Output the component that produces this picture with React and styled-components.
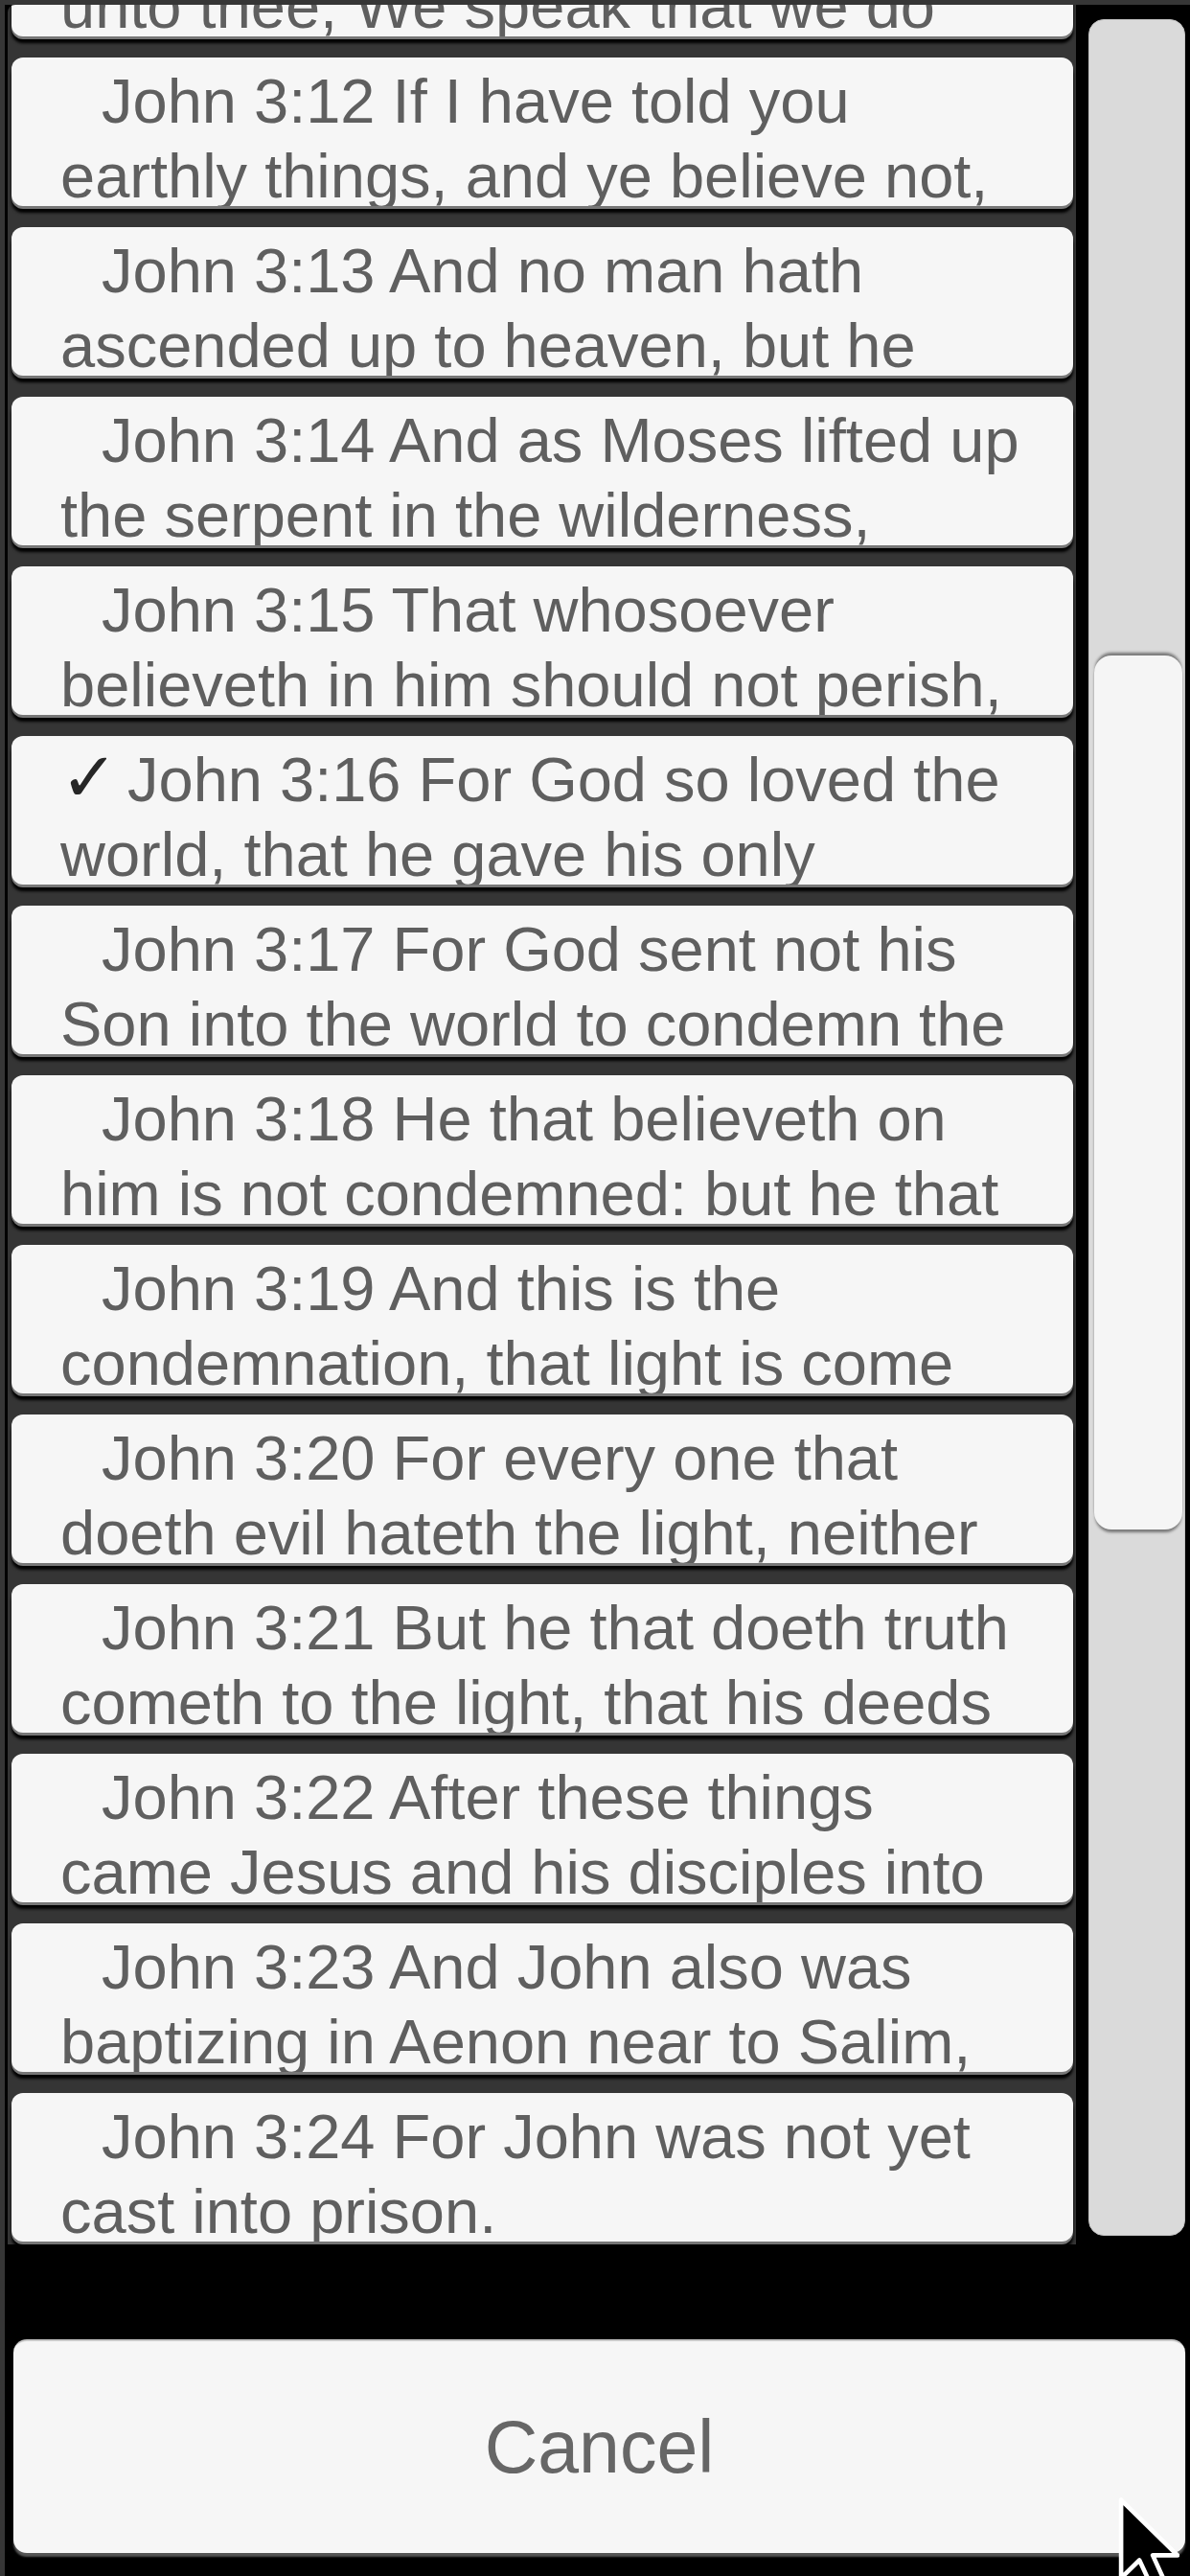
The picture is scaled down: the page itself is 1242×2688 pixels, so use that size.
import React, { useLayoutEffect, useRef } from "react";
import styled, { createGlobalStyle } from "styled-components";

const GlobalStyle = createGlobalStyle`
    html, body {
        margin:0;
        padding:0;
        background:#000;
        overflow:hidden;
    }
    #root {
        width:1242px;
        height:2688px;
        overflow:hidden;
    }
`;

const Screen = styled.div`
    position:relative;
    box-sizing:border-box;
    width:1242px;
    height:2688px;
    background:#000;
    border-left:5px solid #363636;
    border-top:5px solid #363636;
    display:flex;
    flex-direction:column;
    font-family:"Liberation Sans", Arial, sans-serif;
`;

const Main = styled.div`
    display:flex;
    height:2337px;
`;

const ListPane = styled.div`
    flex:1;
    margin-left:3px;
    padding:0 3px 0 4px;
    background:#353535;
    border-top-left-radius:8px;
    overflow:hidden;
`;

const Row = styled.div`
    height:155px;
    margin-bottom:22px;
    box-sizing:border-box;
    padding:7px 20px 0 51px;
    background:#f6f6f6;
    border-radius:12px;
    box-shadow:0 3px 0 #777, 0 7px 3px #000;
    overflow:hidden;
    color:#5f5f5f;
    font-size:65px;
    line-height:78px;
`;

const Line = styled.span`
    display:block;
    white-space:nowrap;
`;

const Mark = styled.span`
    display:inline-block;
    width:${props => (props.$checked ? "70px" : "43px")};
    color:#262626;
    font-family:"DejaVu Sans", sans-serif;
    font-size:72px;
    line-height:60px;
`;

const ScrollColumn = styled.div`
    flex:0 0 119px;
    box-sizing:border-box;
    padding:15px 5px 9px 13px;
    display:flex;
`;

const Track = styled.div`
    flex:1;
    box-sizing:border-box;
    padding:0 2px 0 5px;
    background:#dadada;
    border:1px solid #c4c4c4;
    border-radius:16px;
    display:flex;
    flex-direction:column;
`;

const Thumb = styled.div`
    margin-top:${props => props.$offset}px;
    height:${props => props.$size}px;
    background:#f5f5f5;
    border-radius:18px;
    box-shadow:0 -4px 3px -1px rgba(0,0,0,0.45), 0 4px 3px -1px rgba(0,0,0,0.45);
`;

const CancelButton = styled.button`
    margin:99px 5px 0 9px;
    height:223px;
    background:#f6f6f6;
    border:none;
    border-top:2px solid #c8c8c8;
    border-radius:14px;
    box-shadow:0 4px 2px #555;
    color:#666;
    font-family:"Liberation Sans", Arial, sans-serif;
    font-size:77px;
    padding:0;
`;

const Cursor = styled.svg`
    position:absolute;
    left:1162px;
    top:2600px;
`;

const verses = [
    ["John 3:11 Verily, verily, I say", "unto thee, We speak that we do"],
    ["John 3:12 If I have told you", "earthly things, and ye believe not,"],
    ["John 3:13 And no man hath", "ascended up to heaven, but he"],
    ["John 3:14 And as Moses lifted up", "the serpent in the wilderness,"],
    ["John 3:15 That whosoever", "believeth in him should not perish,"],
    ["John 3:16 For God so loved the", "world, that he gave his only", true],
    ["John 3:17 For God sent not his", "Son into the world to condemn the"],
    ["John 3:18 He that believeth on", "him is not condemned: but he that"],
    ["John 3:19 And this is the", "condemnation, that light is come"],
    ["John 3:20 For every one that", "doeth evil hateth the light, neither"],
    ["John 3:21 But he that doeth truth", "cometh to the light, that his deeds"],
    ["John 3:22 After these things", "came Jesus and his disciples into"],
    ["John 3:23 And John also was", "baptizing in Aenon near to Salim,"],
    ["John 3:24 For John was not yet", "cast into prison."],
    ["John 3:25 Then there arose a", "question between some of John's"]
];

const SCROLL_TOP = 122;

const App = () => {
    const listRef = useRef(null);

    useLayoutEffect(() => {
        if (listRef.current) listRef.current.scrollTop = SCROLL_TOP;
    }, []);

    return (
        <>
            <GlobalStyle />
            <Screen>
                <Main>
                    <ListPane ref={listRef}>
                        {verses.map(([first, second, checked]) => (
                            <Row key={first}>
                                <Line>
                                    <Mark $checked={checked}>{checked ? "✓" : ""}</Mark>
                                    {first}
                                </Line>
                                <Line>{second}</Line>
                            </Row>
                        ))}
                    </ListPane>
                    <ScrollColumn>
                        <Track>
                            <Thumb $offset={663} $size={912} />
                        </Track>
                    </ScrollColumn>
                </Main>
                <CancelButton>Cancel</CancelButton>
                <Cursor width="64" height="100" viewBox="0 0 12.4 19.2">
                    <path
                        d="M0.6 0.6 L0.6 16.4 L4.3 12.8 L7 18.6 L9.6 17.5 L7 11.8 L12 11.8 Z"
                        fill="#000"
                        stroke="#fff"
                        strokeWidth="0.9"
                        strokeLinejoin="round"
                    />
                </Cursor>
            </Screen>
        </>
    );
};

export default App;
